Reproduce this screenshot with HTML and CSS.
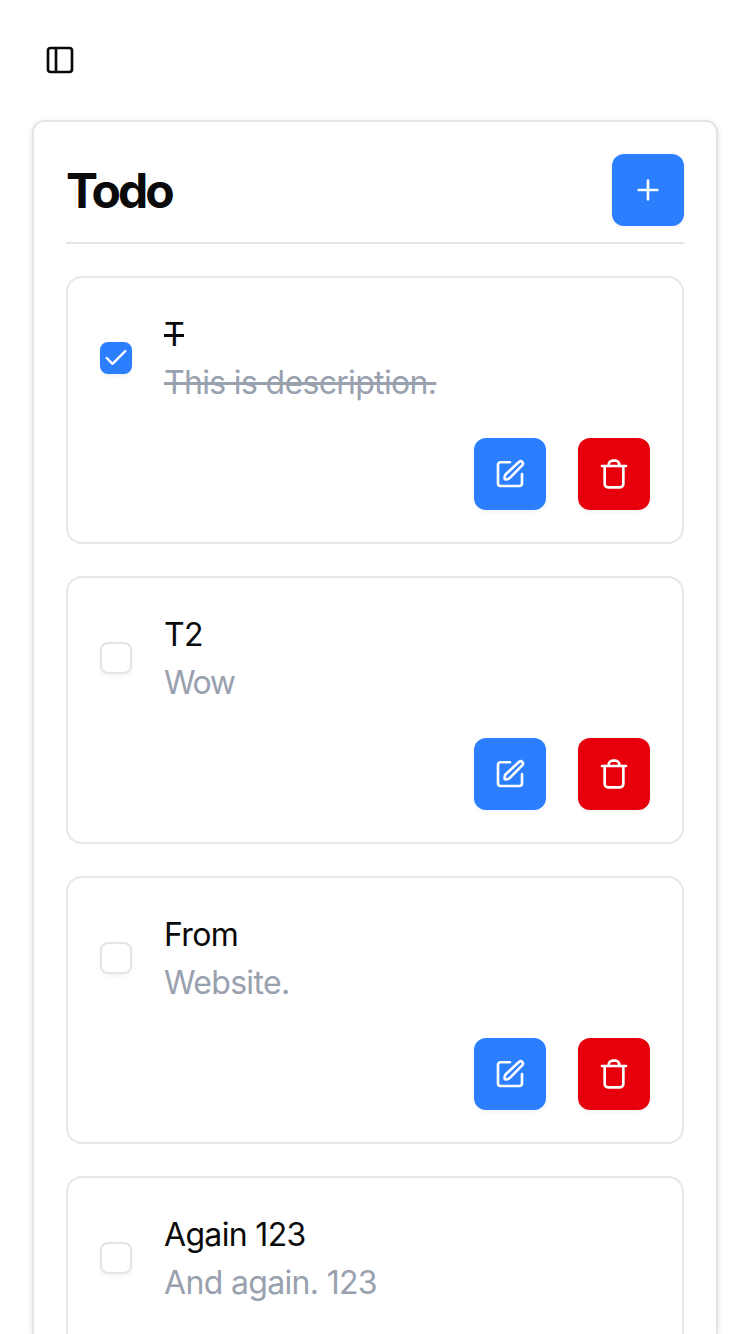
FILE: index.html
```html
<!DOCTYPE html>
<html lang="en">
<head>
<meta charset="utf-8">
<title>Todo</title>
<link rel="stylesheet" href="styles.css">
</head>
<body>
<svg class="defs" aria-hidden="true">
  <symbol id="panel" viewBox="0 0 24 24"><rect width="18" height="18" x="3" y="3" rx="2"/><path d="M9 3v18"/></symbol>
  <symbol id="plus" viewBox="0 0 24 24"><path d="M5 12h14M12 5v14"/></symbol>
  <symbol id="check" viewBox="0 0 24 24"><path d="M20 6 9 17l-5-5"/></symbol>
  <symbol id="edit" viewBox="0 0 24 24"><path d="M12 3.2H5a2 2 0 0 0-2 2V19a2 2 0 0 0 2 2h14a2 2 0 0 0 2-2v-7"/><path d="M18.9 2.8a1.75 1.75 0 0 1 2.4 2.5l-9.4 9.6a3 3 0 0 1-1.7.9l-1.5.2a.7.7 0 0 1-.8-.8l.2-1.5a3 3 0 0 1 .9-1.7z"/></symbol>
  <symbol id="trash" viewBox="0 0 24 24"><path d="M3 6h18M19 6v13.5a2.5 2.5 0 0 1-2.5 2.5h-9A2.5 2.5 0 0 1 5 19.500V6M8 6V5a3 3 0 0 1 3-3h2a3 3 0 0 1 3 3v1"/></symbol>
</svg>
<header class="topbar">
  <button class="toggle" aria-label="Toggle sidebar"><svg class="icon"><use href="#panel"/></svg></button>
</header>
<main class="card">
  <div class="card-head">
    <h1 class="heading">Todo</h1>
    <button class="btn" aria-label="Add"><svg class="icon"><use href="#plus"/></svg></button>
  </div>
  <ul class="list">
    <li class="item done">
      <div class="row">
        <span class="box checked"><svg class="tick"><use href="#check"/></svg></span>
        <div class="text"><p class="title">T</p><p class="desc">This is description.</p></div>
      </div>
      <div class="actions">
        <button class="btn" aria-label="Edit"><svg class="icon"><use href="#edit"/></svg></button>
        <button class="btn danger" aria-label="Delete"><svg class="icon"><use href="#trash"/></svg></button>
      </div>
    </li>
    <li class="item">
      <div class="row">
        <span class="box"></span>
        <div class="text"><p class="title">T2</p><p class="desc tight">Wow</p></div>
      </div>
      <div class="actions">
        <button class="btn" aria-label="Edit"><svg class="icon"><use href="#edit"/></svg></button>
        <button class="btn danger" aria-label="Delete"><svg class="icon"><use href="#trash"/></svg></button>
      </div>
    </li>
    <li class="item">
      <div class="row">
        <span class="box"></span>
        <div class="text"><p class="title">From</p><p class="desc">Website.</p></div>
      </div>
      <div class="actions">
        <button class="btn" aria-label="Edit"><svg class="icon"><use href="#edit"/></svg></button>
        <button class="btn danger" aria-label="Delete"><svg class="icon"><use href="#trash"/></svg></button>
      </div>
    </li>
    <li class="item cut">
      <div class="row">
        <span class="box"></span>
        <div class="text"><p class="title">Again 123</p><p class="desc">And again. 123</p></div>
      </div>
    </li>
  </ul>
</main>
</body>
</html>
```
FILE: styles.css
```css
* { box-sizing: border-box; margin: 0; padding: 0; }
html, body { height: 1334px; overflow: hidden; }
body {
  display: flex;
  flex-direction: column;
  background: #fff;
  color: #0a0a0a;
  font-family: Inter, "Liberation Sans", sans-serif;
  font-size: 32px;
  font-weight: 430;
  letter-spacing: -0.67px;
}
button { border: 0; background: none; color: inherit; }
.defs { display: none; }
.icon, .tick {
  display: block;
  width: 32px;
  height: 32px;
  fill: none;
  stroke: currentColor;
  stroke-width: 2;
  stroke-linecap: round;
  stroke-linejoin: round;
}
.tick { width: 28px; height: 28px; flex: none; }
.topbar { flex: none; height: 120px; padding: 32px; }
.toggle { display: flex; width: 56px; height: 56px; align-items: center; justify-content: center; }
.card {
  flex: none;
  height: 1214px;
  margin: 0 32px;
  padding: 32px 32px 0;
  border: 2px solid #e5e5e5;
  border-bottom: 0;
  border-radius: 12px 12px 0 0;
  box-shadow: 0 2px 6px rgba(0, 0, 0, .1), 0 2px 4px -2px rgba(0, 0, 0, .1);
}
.card-head {
  display: flex;
  justify-content: space-between;
  align-items: center;
  padding-bottom: 16px;
  border-bottom: 2px solid #e5e5e5;
}
.heading { padding-top: 2px; font-size: 48px; line-height: 70px; font-weight: 700; letter-spacing: -2.9px; }
.btn {
  display: flex;
  width: 72px;
  height: 72px;
  align-items: center;
  justify-content: center;
  border-radius: 12px;
  background: #2b7fff;
  color: #f8fafc;
  box-shadow: 0 2px 4px rgba(0, 0, 0, .05);
}
.danger { background: #e7000b; color: #fff; }
.list { display: flex; flex-direction: column; gap: 32px; margin-top: 32px; list-style: none; }
.item {
  display: flex;
  flex-direction: column;
  gap: 32px;
  height: 268px;
  padding: 32px;
  border: 2px solid #e5e7eb;
  border-radius: 16px;
}
.cut { height: 158px; padding-bottom: 0; border-bottom: 0; border-radius: 16px 16px 0 0; }
.row { display: flex; align-items: center; gap: 32px; }
.box {
  display: flex;
  width: 32px;
  height: 32px;
  align-items: center;
  justify-content: center;
  border: 2px solid #e5e5e5;
  border-radius: 8px;
  box-shadow: 0 2px 4px rgba(0, 0, 0, .05);
}
.checked { border-color: #2b7fff; background: #2b7fff; color: #fff; }
.title, .desc { white-space: nowrap; }
.title { line-height: 50px; }
.desc { line-height: 46px; color: #99a1af; }
.tight { letter-spacing: -1.4px; }
.done .title, .done .desc { text-decoration: line-through; text-decoration-thickness: 3px; }
.done .text { display: flex; flex-direction: column; align-items: flex-start; }
.actions { display: flex; justify-content: flex-end; gap: 32px; }
```
